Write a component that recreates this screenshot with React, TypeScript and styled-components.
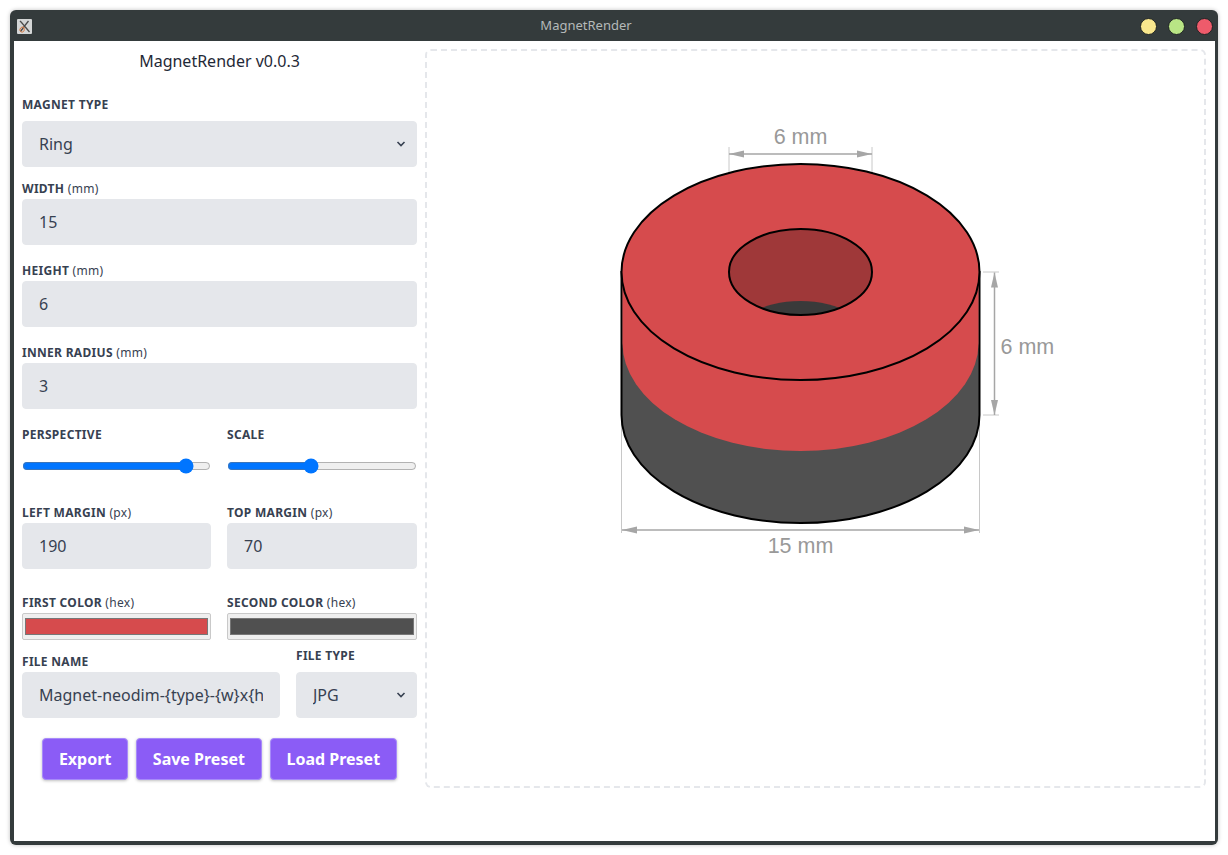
import React from "react";
import styled, { createGlobalStyle } from "styled-components";

const RED = "#d64b4d";
const GRAY = "#505050";

const GlobalStyle = createGlobalStyle`
  html, body {
    margin: 0;
    padding: 0;
    background: #fff;
  }
  * {
    box-sizing: border-box;
  }
  body {
    font-family: "Noto Sans", "Open Sans", sans-serif;
  }
`;

const Page = styled.div`
  width: 1228px;
  height: 855px;
  padding: 10px;
`;

const Window = styled.div`
  width: 1208px;
  height: 835px;
  display: flex;
  flex-direction: column;
  background: #343b3c;
  border-radius: 6px;
  box-shadow: 0 0 4px rgba(0, 0, 0, 0.25);
  padding: 0 3px 4px 4px;
`;

const TitleBar = styled.div`
  height: 31px;
  flex: none;
  display: flex;
  align-items: center;
  padding: 0 0 0 3px;
`;

const AppIcon = styled.svg`
  width: 15px;
  height: 15px;
  flex: none;
  margin-top: 2px;
`;

const Title = styled.div`
  flex: 1;
  text-align: center;
  font-size: 13px;
  color: #b4b9b9;
  margin-top: -1px;
`;

const WindowButtons = styled.div`
  display: flex;
  gap: 11px;
  padding-right: 2px;
  margin-top: 2px;
`;

const WindowButton = styled.div<{ $color: string }>`
  width: 17px;
  height: 17px;
  border-radius: 50%;
  background: ${(p) => p.$color};
  border: 1px solid #1f2424;
`;

const Content = styled.div`
  flex: 1;
  display: flex;
  background: #fff;
  padding: 8px 9px 0 8px;
`;

const Sidebar = styled.div`
  width: 395px;
  flex: none;
  margin-right: 8px;
`;

const AppTitle = styled.div`
  font-size: 16px;
  line-height: 24px;
  text-align: center;
  color: #1f2937;
  margin-bottom: 24px;
`;

const Field = styled.div<{ $mb?: number }>`
  margin-bottom: ${(p) => p.$mb ?? 0}px;
  min-width: 0;
`;

const Label = styled.label<{ $mb?: number }>`
  display: block;
  font-size: 12px;
  line-height: 16px;
  font-weight: 700;
  letter-spacing: 0.3px;
  text-transform: uppercase;
  color: #374151;
  margin-bottom: ${(p) => p.$mb ?? 2}px;
`;

const Unit = styled.span`
  font-weight: 400;
  text-transform: none;
`;

const TextInput = styled.input`
  display: block;
  width: 100%;
  height: 46px;
  border: 1px solid #e5e7eb;
  border-radius: 4px;
  background: #e5e7eb;
  padding: 0 16px;
  font: 400 16px "Noto Sans", sans-serif;
  color: #374151;
  outline: none;
`;

const SelectWrap = styled.div`
  position: relative;
`;

const Select = styled.select`
  display: block;
  width: 100%;
  height: 46px;
  appearance: none;
  border: 1px solid #e5e7eb;
  border-radius: 4px;
  background: #e5e7eb;
  padding: 0 16px;
  font: 400 16px "Noto Sans", sans-serif;
  color: #374151;
  outline: none;
`;

const Chevron = styled.svg`
  position: absolute;
  right: 11px;
  top: 19px;
  width: 10px;
  height: 8px;
  pointer-events: none;
`;

const TwoCols = styled.div<{ $mb?: number }>`
  display: grid;
  grid-template-columns: 189px 190px;
  column-gap: 16px;
  margin-bottom: ${(p) => p.$mb ?? 0}px;
`;

const FileRow = styled.div`
  display: grid;
  grid-template-columns: 258px 121px;
  column-gap: 16px;
  align-items: end;
  margin-bottom: 20px;
`;

const Slider = styled.input`
  display: block;
  width: 100%;
  height: 16px;
  margin: 0;
  accent-color: #0075ff;
`;

const SliderSlot = styled.div`
  height: 60px;
  padding-top: 13px;
`;

const ColorInput = styled.input`
  display: block;
  width: 100%;
  height: 27px;
  margin: 0;
  padding: 0;
  border: 1px solid #c9c9c9;
  border-radius: 2px;
  background: #efefef;

  &::-webkit-color-swatch-wrapper {
    padding: 4px 2px;
  }
  &::-webkit-color-swatch {
    border: 1px solid #777;
    border-radius: 0;
  }
`;

const Buttons = styled.div`
  display: flex;
  justify-content: center;
  gap: 8px;
`;

const Button = styled.button`
  height: 42px;
  padding: 0 15.75px;
  border: 1px solid #a78bfa;
  border-radius: 4px;
  background: #8b5cf6;
  box-shadow: 0 1px 3px rgba(0, 0, 0, 0.25);
  color: #fff;
  font: 700 16px "Noto Sans", sans-serif;
  white-space: nowrap;
`;

const Preview = styled.div`
  flex: 1;
  height: 739px;
  border: 2px dashed #e5e7eb;
  border-radius: 6px;
`;

const Drawing = styled.svg`
  display: block;
  width: 777px;
  height: 735px;
`;

const DimText = styled.text`
  font-family: "Liberation Sans", Arial, sans-serif;
  font-size: 21.5px;
  fill: #999;
`;

const CX = 800.5;
const TOP_Y = 272;
const MID_Y = 343;
const BOT_Y = 415;
const RX = 179;
const RY = 108;
const HOLE_RX = 71.5;
const HOLE_RY = 43;

// viewBox starts at the panel's inner corner, so coordinates below are page pixels
const Magnet = () => (
  <Drawing viewBox="427 51 777 735">
    <defs>
      <clipPath id="hole">
        <ellipse cx={CX} cy={TOP_Y} rx={HOLE_RX} ry={HOLE_RY} />
      </clipPath>
      <marker id="arrow" viewBox="0 0 15 8" refX="15" refY="4" markerWidth="15" markerHeight="8" markerUnits="userSpaceOnUse" orient="auto-start-reverse">
        <path d="M0 0.5 L15 4 L0 7.5 Z" fill="#a6a6a6" />
      </marker>
    </defs>

    {/* extension lines sit behind the magnet */}
    <g stroke="#c8c8c8" strokeWidth={1}>
      <line x1={729} y1={147} x2={729} y2={175} />
      <line x1={872} y1={147} x2={872} y2={175} />
      <line x1={983} y1={272} x2={999} y2={272} />
      <line x1={983} y1={415} x2={999} y2={415} />
      <line x1={CX - RX} y1={415} x2={CX - RX} y2={533} />
      <line x1={CX + RX} y1={415} x2={CX + RX} y2={533} />
    </g>

    {/* body */}
    <path
      d={`M${CX - RX} ${TOP_Y} V${BOT_Y} A${RX} ${RY} 0 0 0 ${CX + RX} ${BOT_Y} V${TOP_Y} Z`}
      fill={GRAY}
      stroke="#000"
      strokeWidth={2}
    />
    <path
      d={`M${CX - RX + 1} ${TOP_Y} V${MID_Y} A${RX - 1} ${RY} 0 0 0 ${CX + RX - 1} ${MID_Y} V${TOP_Y} Z`}
      fill={RED}
    />
    <ellipse cx={CX} cy={TOP_Y} rx={RX} ry={RY} fill={RED} stroke="#000" strokeWidth={2} />

    {/* hole */}
    <ellipse cx={CX} cy={TOP_Y} rx={HOLE_RX} ry={HOLE_RY} fill="#9f3839" />
    <ellipse cx={CX} cy={MID_Y + 1} rx={HOLE_RX} ry={HOLE_RY} fill="#3a3a3a" clipPath="url(#hole)" />
    <ellipse cx={CX} cy={TOP_Y} rx={HOLE_RX} ry={HOLE_RY} fill="none" stroke="#000" strokeWidth={2} />

    {/* dimension arrows */}
    <g stroke="#a6a6a6" strokeWidth={1.5} markerStart="url(#arrow)" markerEnd="url(#arrow)">
      <line x1={729} y1={154} x2={872} y2={154} />
      <line x1={994.5} y1={272.5} x2={994.5} y2={415} />
      <line x1={622} y1={530} x2={979} y2={530} />
    </g>
    <DimText x={CX} y={144} textAnchor="middle">6 mm</DimText>
    <DimText x={1000.5} y={354}>6 mm</DimText>
    <DimText x={CX} y={553} textAnchor="middle">15 mm</DimText>
  </Drawing>
);

const SelectChevron = () => (
  <Chevron viewBox="0 0 10 8">
    <path d="M1.5 2 L5 5.5 L8.5 2" fill="none" stroke="#374151" strokeWidth={1.6} />
  </Chevron>
);

export default function App() {
  return (
    <Page>
      <GlobalStyle />
      <Window>
        <TitleBar>
          <AppIcon viewBox="0 0 15 15">
            <rect width="15" height="15" rx="1" fill="#d4d6d6" />
            <path d="M3 2 C6 5 9 9 12.5 13 M11.5 2 C9 5 6 9 3.5 12.5" fill="none" stroke="#4a4a4a" strokeWidth={1.3} />
            <path d="M6.5 8 C3 7.5 1.5 12 4.5 13 C7 13.5 8 11 6.5 8 Z" fill="none" stroke="#d9753a" strokeWidth={1} />
          </AppIcon>
          <Title>MagnetRender</Title>
          <WindowButtons>
            <WindowButton $color="#f9e78d" />
            <WindowButton $color="#b9e585" />
            <WindowButton $color="#ee5b6b" />
          </WindowButtons>
        </TitleBar>
        <Content>
          <Sidebar>
            <AppTitle>MagnetRender v0.0.3</AppTitle>

            <Field $mb={14}>
              <Label $mb={8}>Magnet type</Label>
              <SelectWrap>
                <Select defaultValue="Ring">
                  <option>Ring</option>
                  <option>Disc</option>
                </Select>
                <SelectChevron />
              </SelectWrap>
            </Field>

            <Field $mb={18}>
              <Label>Width <Unit>(mm)</Unit></Label>
              <TextInput defaultValue="15" />
            </Field>
            <Field $mb={18}>
              <Label>Height <Unit>(mm)</Unit></Label>
              <TextInput defaultValue="6" />
            </Field>
            <Field $mb={18}>
              <Label>Inner radius <Unit>(mm)</Unit></Label>
              <TextInput defaultValue="3" />
            </Field>

            <TwoCols>
              <Field>
                <Label>Perspective</Label>
                <SliderSlot>
                  <Slider type="range" min={0} max={100} defaultValue={90} />
                </SliderSlot>
              </Field>
              <Field>
                <Label>Scale</Label>
                <SliderSlot>
                  <Slider type="range" min={0} max={100} step={0.1} defaultValue={43.6} />
                </SliderSlot>
              </Field>
            </TwoCols>

            <TwoCols $mb={26}>
              <Field>
                <Label>Left margin <Unit>(px)</Unit></Label>
                <TextInput defaultValue="190" />
              </Field>
              <Field>
                <Label>Top margin <Unit>(px)</Unit></Label>
                <TextInput defaultValue="70" />
              </Field>
            </TwoCols>

            <TwoCols $mb={8}>
              <Field>
                <Label>First color <Unit>(hex)</Unit></Label>
                <ColorInput type="color" defaultValue={RED} />
              </Field>
              <Field>
                <Label>Second color <Unit>(hex)</Unit></Label>
                <ColorInput type="color" defaultValue={GRAY} />
              </Field>
            </TwoCols>

            <FileRow>
              <Field>
                <Label>File name</Label>
                <TextInput defaultValue="Magnet-neodim-{type}-{w}x{h}-{r}" />
              </Field>
              <Field>
                <Label $mb={8}>File type</Label>
                <SelectWrap>
                  <Select defaultValue="JPG">
                    <option>JPG</option>
                    <option>PNG</option>
                  </Select>
                  <SelectChevron />
                </SelectWrap>
              </Field>
            </FileRow>

            <Buttons>
              <Button>Export</Button>
              <Button>Save Preset</Button>
              <Button>Load Preset</Button>
            </Buttons>
          </Sidebar>
          <Preview>
            <Magnet />
          </Preview>
        </Content>
      </Window>
    </Page>
  );
}
